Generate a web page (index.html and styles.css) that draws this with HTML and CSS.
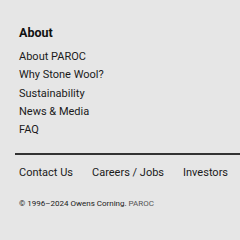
FILE: index.html
```html
<!DOCTYPE html>
<html lang="en">
<head>
    <meta charset="UTF-8">
    <meta name="viewport" content="width=device-width, initial-scale=1.0">
    <title>PAROC footer</title>
    <link rel="stylesheet" href="styles.css">
</head>
<body>
    <footer class="footer">
        <div class="about">
            <h3 class="about-title">About</h3>
            <ul class="about-list">
                <li><a href="#">About PAROC</a></li>
                <li><a href="#">Why Stone Wool?</a></li>
                <li><a href="#">Sustainability</a></li>
                <li><a href="#">News &amp; Media</a></li>
                <li><a href="#">FAQ</a></li>
            </ul>
        </div>
        <div class="bottom">
            <nav class="bottom-links">
                <a href="#">Contact Us</a>
                <a href="#">Careers / Jobs</a>
                <a href="#">Investors</a>
            </nav>
            <p class="copyright">&copy; 1996&ndash;2024 Owens Corning. <a href="#">PAROC</a></p>
        </div>
    </footer>
</body>
</html>
```

FILE: styles.css
```css
html, body {
    margin: 0;
    background-color: #e6e6e6;
}
body {
    font-family: Roboto, "Liberation Sans", sans-serif;
    color: #1a1a1a;
    width: 240px;
    height: 240px;
    overflow: hidden;
}
.footer {
    padding: 24px 0 0 15px;
}
.about {
    padding-left: 4px;
}
.about-title {
    margin: 0 0 6px;
    font-size: 12.5px;
    font-weight: 700;
    line-height: 18px;
    color: #111;
}
.about-list {
    list-style: none;
    margin: 0;
    padding: 0;
}
.about-list li {
    font-size: 11px;
    line-height: 18.25px;
}
.about-list a {
    color: #1a1a1a;
    text-decoration: none;
}
.bottom {
    margin-top: 14px;
    border-top: 2px solid #333;
    padding: 9px 0 0 4px;
}
.bottom-links {
    display: flex;
    gap: 19px;
    white-space: nowrap;
}
.bottom-links a {
    font-size: 11px;
    line-height: 18px;
    color: #1a1a1a;
    text-decoration: none;
}
.copyright {
    margin: 16px 0 0;
    font-size: 8px;
    line-height: 12px;
    color: #1a1a1a;
}
.copyright a {
    color: #555;
    text-decoration: none;
}
```
